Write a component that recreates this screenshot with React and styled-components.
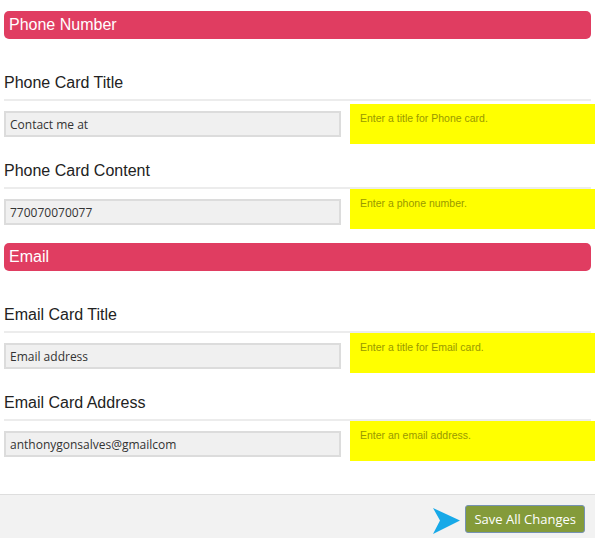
import React from "react";
import styled, { createGlobalStyle } from "styled-components";

const GlobalStyle = createGlobalStyle`
  html, body {
    margin: 0;
    padding: 0;
    background: #fff;
    overflow: hidden;
  }
  body {
    font-family: Arial, "Liberation Sans", sans-serif;
  }
`;

const Page = styled.div`
  width: 595px;
  height: 538px;
  display: flex;
  flex-direction: column;
  overflow: hidden;
`;

const Content = styled.div`
  padding: 11px 4px 0 4px;
  flex: 1;
`;

const SectionHeader = styled.h2`
  margin: 0 0 17px 0;
  height: 28px;
  line-height: 27px;
  padding: 0 5px;
  background-color: #e03d61;
  border-radius: 5px;
  color: #fff;
  font-size: 16px;
  font-weight: normal;
`;

const Field = styled.div`
  margin-bottom: ${(props) => props.gap || 0}px;
`;

const Label = styled.h3`
  margin: 0;
  padding: 17px 0 6px 0;
  font-size: 16px;
  line-height: 20px;
  font-weight: normal;
  color: #222;
  border-bottom: 2px solid #ececec;
`;

const Row = styled.div`
  display: grid;
  grid-template-columns: 337px 1fr;
  column-gap: 9px;
  align-items: start;
  margin-right: -4px;
`;

const Input = styled.input`
  box-sizing: border-box;
  width: 337px;
  height: 26px;
  margin-top: ${(props) => props.offset}px;
  padding: 0 4px;
  border: 2px solid #dcdcdc;
  background-color: #f0f0f0;
  font-family: "Open Sans", sans-serif;
  font-size: 12px;
  color: #333;
  outline: none;
`;

const Hint = styled.div`
  box-sizing: border-box;
  height: 40px;
  margin-top: ${(props) => props.offset}px;
  padding: 8px 10px;
  background-color: #ffff00;
  color: #999900;
  font-size: 10.5px;
  line-height: 12px;
`;

const Footer = styled.div`
  box-sizing: border-box;
  height: 44px;
  background-color: #f2f2f2;
  border-top: 1px solid #dedede;
  display: flex;
  justify-content: flex-end;
  align-items: flex-start;
  gap: 5px;
  padding: 10px 10px 0 0;
`;

const Arrow = styled.svg`
  width: 28px;
  height: 26px;
  margin-top: 3px;
`;

const SaveButton = styled.button`
  height: 28px;
  padding: 0 8px;
  background-color: #849b3a;
  border: 1px solid #7692b3;
  border-radius: 3px;
  color: #fff;
  font-family: "Open Sans", sans-serif;
  font-size: 13px;
  cursor: pointer;
`;

const sections = [
  {
    title: "Phone Number",
    fields: [
      { label: "Phone Card Title", value: "Contact me at", hint: "Enter a title for Phone card.", hintOffset: 3, gap: 0 },
      { label: "Phone Card Content", value: "770070070077", hint: "Enter a phone number.", hintOffset: 0, gap: 14 },
    ],
  },
  {
    title: "Email",
    fields: [
      { label: "Email Card Title", value: "Email address", hint: "Enter a title for Email card.", hintOffset: 0, gap: 3 },
      { label: "Email Card Address", value: "anthonygonsalves@gmailcom", hint: "Enter an email address.", hintOffset: 0, gap: 0 },
    ],
  },
];

function App() {
  return (
    <>
      <GlobalStyle />
      <Page>
        <Content>
          {sections.map((section) => (
            <div key={section.title}>
              <SectionHeader>{section.title}</SectionHeader>
              {section.fields.map((f) => (
                <Field key={f.label} gap={f.gap}>
                  <Label>{f.label}</Label>
                  <Row>
                    <Input offset={10} defaultValue={f.value} />
                    <Hint offset={f.hintOffset}>{f.hint}</Hint>
                  </Row>
                </Field>
              ))}
            </div>
          ))}
        </Content>
        <Footer>
          <Arrow viewBox="0 0 28 26">
            <path d="M1 0 L28 12.5 L1 26 L8 12.5 Z" fill="#17a9e8" />
          </Arrow>
          <SaveButton>Save All Changes</SaveButton>
        </Footer>
      </Page>
    </>
  );
}

export default App;
